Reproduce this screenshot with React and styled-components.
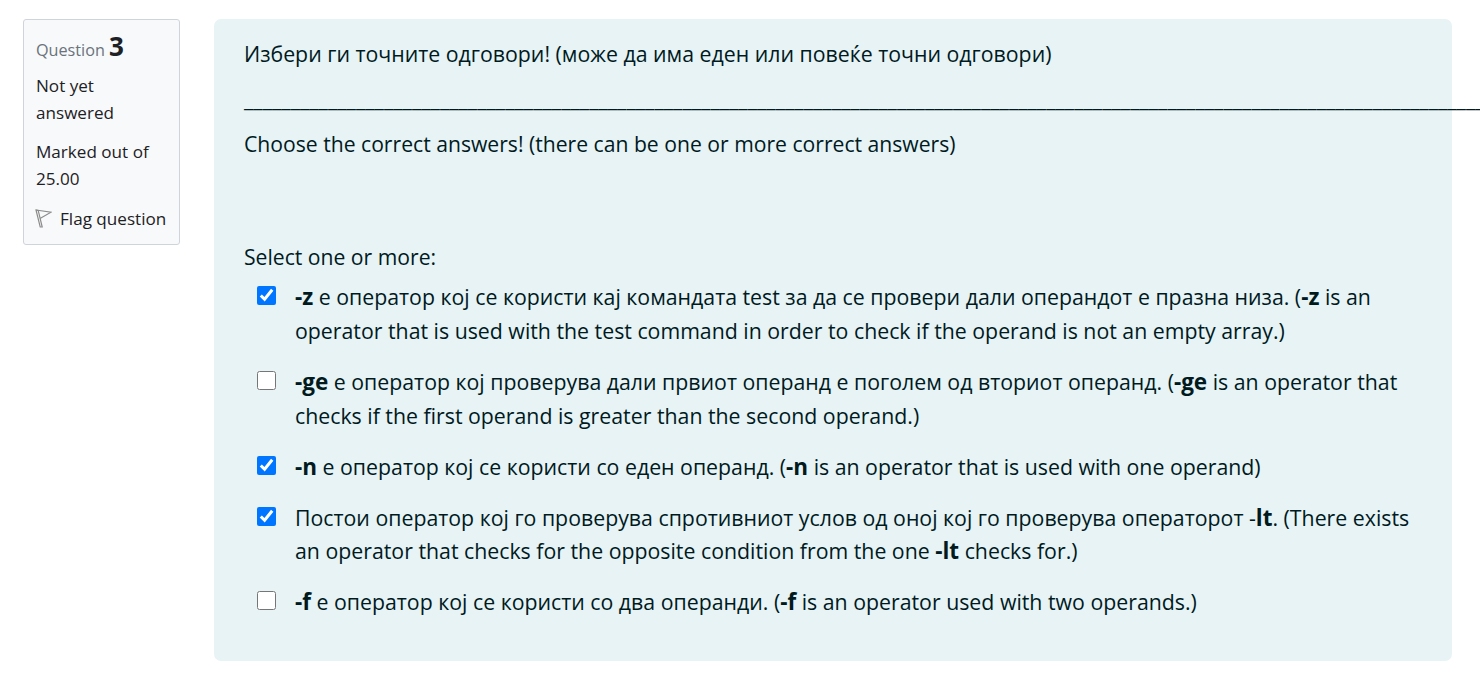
import React from "react";
import styled, { createGlobalStyle } from "styled-components";

const GlobalStyle = createGlobalStyle`
  html, body {
    margin: 0;
    padding: 0;
    background: #fff;
    overflow: hidden;
  }
  body {
    font-family: "Open Sans", "Noto Sans", sans-serif;
    font-size: 21.3px;
    line-height: 33.75px;
    color: #001a1e;
  }
  b {
    font-size: 22.5px;
    line-height: 0;
  }
`;

const Page = styled.div`
  display: flex;
  align-items: flex-start;
  gap: 34px;
  width: 1480px;
  height: 693px;
  padding: 19px 28px 0 23px;
  box-sizing: border-box;
  overflow: hidden;
`;

const Info = styled.aside`
  flex: 0 0 157px;
  min-width: 0;
  height: 226px;
  box-sizing: border-box;
  padding: 11px 10px 0 12px;
  background: #f8f9fa;
  border: 1px solid #cfd4dc;
  border-radius: 3px;
  font-size: 17.1px;
  line-height: 27px;
  color: #1d2125;
`;

const QuestionNo = styled.h3`
  margin: 0 0 7px;
  font-size: 16.2px;
  font-weight: 400;
  line-height: 30px;
  color: #6a737b;
`;

const Num = styled.span`
  font-size: 26px;
  font-weight: 700;
  color: #1d2125;
`;

const State = styled.div`
  margin-bottom: 12px;
`;

const Flag = styled.div`
  display: flex;
  align-items: center;
  gap: 8px;
  margin-top: 13px;
  margin-left: -1px;
  white-space: nowrap;
`;

const Content = styled.main`
  flex: 0 0 1238px;
  min-width: 0;
  height: 642px;
  box-sizing: border-box;
  padding: 18px 30px 0;
  background: #e7f3f5;
  border-radius: 7px;
`;

const Para = styled.p`
  margin: 0 0 ${(p) => p.$after || 0}px;
  font-size: ${(p) => p.$size || "inherit"};
  white-space: nowrap;
`;

const Options = styled.div`
  display: flex;
  flex-direction: column;
  gap: 17.25px;
  margin-top: 6px;
`;

const Option = styled.label`
  display: flex;
  align-items: flex-start;
  padding-left: 13px;
`;

const Box = styled.input`
  flex: 0 0 19px;
  width: 19px;
  height: 19px;
  margin: 6px 19px 0 0;
`;

const OptionText = styled.div`
  flex: 1;
  min-width: 0;
`;

const answers = [
  {
    checked: true,
    text: (
      <>
        <b>-z</b> е оператор кој се користи кај командата test за да се провери дали операндот е празна низа. (<b>-z</b> is an operator that is used with the test command in order to check if the operand is not an empty array.)
      </>
    ),
  },
  {
    checked: false,
    text: (
      <>
        <b>-ge</b> е оператор кој проверува дали првиот операнд е поголем од вториот операнд. (<b>-ge</b> is an operator that checks if the first operand is greater than the second operand.)
      </>
    ),
  },
  {
    checked: true,
    text: (
      <>
        <b>-n</b> е оператор кој се користи со еден операнд. (<b>-n</b> is an operator that is used with one operand)
      </>
    ),
  },
  {
    checked: true,
    text: (
      <>
        Постои оператор кој го проверува спротивниот услов од оној кој го проверува операторот -<b>lt</b>. (There exists an operator that checks for the opposite condition from the one <b>-lt</b> checks for.)
      </>
    ),
  },
  {
    checked: false,
    text: (
      <>
        <b>-f</b> е оператор кој се користи со два операнди. (<b>-f</b> is an operator used with two operands.)
      </>
    ),
  },
];

const FlagIcon = () => (
  <svg width="17" height="19" viewBox="0 0 17 19" fill="none" stroke="#8c8c8c" strokeWidth="1.2">
    <path d="M1 1 L16 3.2 L5 9.5" />
    <path d="M1 1 L3.2 1.4 L7.2 18 L5.2 18 Z" />
  </svg>
);

export default function App() {
  return (
    <Page>
      <GlobalStyle />
      <Info>
        <QuestionNo>
          Question <Num>3</Num>
        </QuestionNo>
        <State>Not yet answered</State>
        <State>Marked out of 25.00</State>
        <Flag>
          <FlagIcon />
          Flag question
        </Flag>
      </Info>
      <Content>
        <Para $after={11}>Избери ги точните одговори! (може да има еден или повеќе точни одговори)</Para>
        <Para $after={11}>{"_".repeat(140)}</Para>
        <Para $after={80} $size="21.15px">Choose the correct answers! (there can be one or more correct answers)</Para>
        <Para $size="21.15px">Select one or more:</Para>
        <Options>
          {answers.map((a, i) => (
            <Option key={i}>
              <Box type="checkbox" defaultChecked={a.checked} />
              <OptionText>{a.text}</OptionText>
            </Option>
          ))}
        </Options>
      </Content>
    </Page>
  );
}
